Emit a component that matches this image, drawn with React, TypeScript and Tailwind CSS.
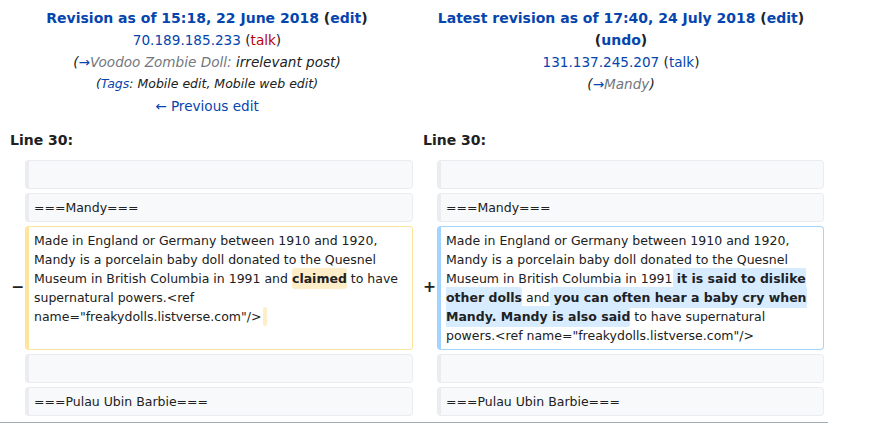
import React from "react";

const BLUE = "text-[#0645ad]";

function Ctx({ children }: { children?: React.ReactNode }) {
  return (
    <div className="border border-l-4 border-[#eaecf0] bg-[#f8f9fa] rounded-[4px] py-[4px] pl-[5px] pr-[5px] text-[12.5px] leading-[19px] text-[#202122]">
      {children ?? "\u00a0"}
    </div>
  );
}

export default function App() {
  return (
    <div
      className="w-[874px] h-[439px] bg-white text-[#202122] overflow-hidden"
      style={{ fontFamily: "'DejaVu Sans', Verdana, sans-serif" }}
    >
      {/* Header */}
      <div className="grid grid-cols-[414px_414px] pt-[7px] text-[13.6px] leading-[22px] text-center">
        <div>
          <div className="font-bold text-[14px]">
            <span className={BLUE}>Revision as of 15:18, 22 June 2018</span> (<span className={BLUE}>edit</span>)
          </div>
          <div>
            <span className={BLUE}>70.189.185.233</span> (<span className="text-[#ba0000]">talk</span>)
          </div>
          <div className="italic">
            (<span className={BLUE}>→</span>
            <span className="text-[#72777d]">Voodoo Zombie Doll:</span> irrelevant post)
          </div>
          <div className="italic text-[12.5px]">
            (<span className={BLUE}>Tags</span>: Mobile edit, Mobile web edit)
          </div>
          <div>
            <span className={BLUE}>← Previous edit</span>
          </div>
        </div>
        <div>
          <div className="font-bold text-[14px] px-[2px]">
            <span className={BLUE}>Latest revision as of 17:40, 24 July 2018</span> (<span className={BLUE}>edit</span>) (<span className={BLUE}>undo</span>)
          </div>
          <div>
            <span className={BLUE}>131.137.245.207</span> (<span className={BLUE}>talk</span>)
          </div>
          <div className="italic">
            (<span className={BLUE}>→</span>
            <span className="text-[#72777d]">Mandy</span>)
          </div>
        </div>
      </div>

      {/* Diff table */}
      <div className="grid grid-cols-[25px_388px_24px_387px] gap-y-[4px] mt-[13px]">
        <div className="col-span-2 pl-[10px] font-bold text-[14px] leading-[20px] mb-[6px]">Line 30:</div>
        <div className="col-span-2 pl-[10px] font-bold text-[14px] leading-[20px] mb-[6px]">Line 30:</div>

        <div />
        <Ctx />
        <div />
        <Ctx />

        <div />
        <Ctx>===Mandy===</Ctx>
        <div />
        <Ctx>===Mandy===</Ctx>

        <div className="flex items-center justify-end pr-[1px] font-bold text-[15.6px]">−</div>
        <div className="border border-l-4 border-[#ffe49c] bg-white rounded-[4px] py-[4px] pl-[5px] pr-[5px] text-[12.5px] leading-[19px] text-[#202122]">
          Made in England or Germany between 1910 and 1920, Mandy is a porcelain baby doll donated to the Quesnel Museum in British Columbia in 1991 and{" "}
          <span className="font-bold bg-[#feeec8] rounded-[3px] py-[3px]">claimed</span> to have supernatural powers.&lt;ref name="freakydolls.listverse.com"/&gt;
          <span className="inline-block align-top w-[4px] h-[19px] bg-[#feeec8] rounded-[2px] ml-[2px]" />
        </div>
        <div className="flex items-center justify-end pr-[1px] font-bold text-[15.6px]">+</div>
        <div className="border border-l-4 border-[#a3d3ff] bg-white rounded-[4px] py-[4px] pl-[5px] pr-[5px] text-[12.5px] leading-[19px] text-[#202122]">
          Made in England or Germany between 1910 and 1920, Mandy is a porcelain baby doll donated to the Quesnel Museum in British Columbia in 1991
          <span className="font-bold bg-[#d8ecff] rounded-[3px] py-[3px]"> it is said to dislike other dolls</span> and
          <span className="font-bold bg-[#d8ecff] rounded-[3px] py-[3px]"> you can often hear a baby cry when Mandy. Mandy is also said</span> to have supernatural powers.&lt;ref name="freakydolls.listverse.com"/&gt;
        </div>

        <div />
        <Ctx />
        <div />
        <Ctx />

        <div />
        <Ctx>===Pulau Ubin Barbie===</Ctx>
        <div />
        <Ctx>===Pulau Ubin Barbie===</Ctx>
      </div>

      <div className="mt-[6px] w-[828px] h-px bg-[#a2a9b1]" />
    </div>
  );
}
